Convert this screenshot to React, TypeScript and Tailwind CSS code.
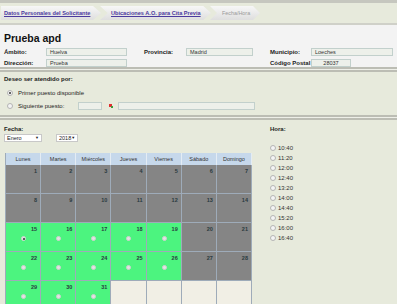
import React from "react";

const horas = ["10:40", "11:20", "12:00", "12:40", "13:20", "14:00", "14:40", "15:20", "16:00", "16:40"];
const dias = ["Lunes", "Martes", "Miércoles", "Jueves", "Viernes", "Sábado", "Domingo"];

// availability for enero 2018
const libres = [15, 16, 17, 18, 19, 22, 23, 24, 25, 26, 29, 30, 31];

const Radio = ({ checked = false }: { checked?: boolean }) => (
  <span className="inline-flex items-center justify-center rounded-full border border-[#b4b4b4] w-[6px] h-[6px] bg-[#f4f4f4]">
    {checked && <span className="w-[2px] h-[2px] rounded-full bg-[#333]" />}
  </span>
);

const Field = ({ w, value, center = false }: { w: string; value: string; center?: boolean }) => (
  <div
    className={`${w} h-[8px] border border-[#c2d0cc] bg-[#edf0ea] text-[5.5px] leading-[6px] px-[3px] text-[#333] ${
      center ? "text-center" : ""
    }`}
  >
    {value}
  </div>
);

const Separator = () => (
  <div className="h-[5px] border-y-2 border-[#bcbdb4] bg-[#eeefe8]" />
);

export default function App() {
  const cells: (number | null)[] = [];
  for (let d = 1; d <= 31; d++) cells.push(d);
  while (cells.length < 35) cells.push(null);

  return (
    <div className="w-[397px] h-[304px] overflow-hidden bg-[#e7eadc] font-['Liberation_Sans',sans-serif] text-[6px] text-[#222]">
      {/* breadcrumb */}
      <div className="h-[3px] bg-[#c6c7bf]" />
      <div className="h-[20px] flex items-center pl-[1px]">
        <div className="h-[14px] w-[100px] bg-gradient-to-b from-[#f7f7f7] to-[#dedede] [clip-path:polygon(0_0,92%_0,100%_50%,92%_100%,0_100%)] flex items-center pl-[3px]">
          <span className="text-[#4b3a9e] underline font-bold text-[5.6px]">Datos Personales del Solicitante</span>
        </div>
        <div className="h-[14px] w-[111px] -ml-[1px] bg-gradient-to-b from-[#f7f7f7] to-[#dedede] [clip-path:polygon(0_0,93%_0,100%_50%,93%_100%,0_100%,7%_50%)] flex items-center pl-[11px]">
          <span className="text-[#4b3a9e] underline font-bold text-[5.6px]">Ubicaciones A.O. para Cita Previa</span>
        </div>
        <div className="h-[14px] w-[50px] -ml-[1px] bg-gradient-to-b from-[#f7f7f7] to-[#dedede] [clip-path:polygon(0_0,86%_0,100%_50%,86%_100%,0_100%,14%_50%)] flex items-center pl-[12px]">
          <span className="text-[#9a9a9a] text-[5.4px]">Fecha/Hora</span>
        </div>
      </div>
      <div className="h-[2px] bg-[#cfd0c8]" />

      {/* datos */}
      <div className="bg-[#f3f3f3] px-[4px] pt-[8px] h-[42px]">
        <div className="text-[10.5px] font-bold leading-[11px] text-[#111]">Prueba apd</div>
        <div className="flex items-center mt-[4px] h-[8px]">
          <div className="w-[42px] font-bold">Ámbito:</div>
          <Field w="w-[81px]" value="Huelva" />
          <div className="w-[17px]" />
          <div className="w-[42px] font-bold">Provincia:</div>
          <Field w="w-[67px]" value="Madrid" />
          <div className="w-[17px]" />
          <div className="w-[41px] font-bold">Municipio:</div>
          <Field w="w-[82px]" value="Loeches" />
        </div>
        <div className="flex items-center mt-[3px] h-[8px]">
          <div className="w-[42px] font-bold">Dirección:</div>
          <Field w="w-[81px]" value="Prueba" />
          <div className="w-[17px]" />
          <div className="w-[42px]" />
          <div className="w-[67px]" />
          <div className="w-[17px]" />
          <div className="w-[41px] font-bold">Código Postal</div>
          <Field w="w-[40px]" value="28037" center />
        </div>
      </div>
      <Separator />

      {/* atendido por */}
      <div className="h-[43px] px-[4px] pt-[3px]">
        <div className="font-bold leading-[8px]">Deseo ser atendido por:</div>
        <div className="flex items-center mt-[6px] h-[8px] pl-[3px]">
          <Radio checked />
          <span className="ml-[5px]">Primer puesto disponible</span>
        </div>
        <div className="flex items-center mt-[5px] h-[8px] pl-[3px]">
          <Radio />
          <span className="ml-[5px] w-[60px]">Siguiente puesto:</span>
          <Field w="w-[24px]" value="" />
          <span className="ml-[6px] w-[6px] h-[6px] relative">
            <span className="absolute left-[1px] top-[1px] w-[3px] h-[3px] bg-[#e03030]" />
            <span className="absolute left-[3px] top-[3px] w-[2px] h-[2px] bg-[#3aa040]" />
          </span>
          <div className="ml-[4px]">
            <Field w="w-[137px]" value="" />
          </div>
        </div>
      </div>
      <Separator />

      {/* fecha / hora */}
      <div className="flex">
        <div className="w-[265px] pl-[4px] pt-[6px]">
          <div className="font-bold leading-[7px]">Fecha:</div>
          <div className="flex items-center mt-[1px] h-[8px]">
            <div className="w-[38px] h-[8px] bg-white border border-[#c8c8c8] flex items-center justify-between px-[2px] text-[5.5px]">
              <span>Enero</span>
              <span className="text-[4px]">▼</span>
            </div>
            <div className="ml-[14px] w-[22px] h-[8px] bg-white border border-[#c8c8c8] flex items-center justify-between px-[2px] text-[5.5px]">
              <span>2018</span>
              <span className="text-[4px]">▼</span>
            </div>
          </div>
          <div className="mt-[11px] ml-[1px] w-[247px] border-l border-[#9eabb9]">
            <div className="grid grid-cols-7 h-[12px] bg-[#c6d8eb]">
              {dias.map((d) => (
                <div key={d} className="flex items-center justify-center border-r border-[#e4ecf4] text-[5.5px] text-[#333]">
                  {d}
                </div>
              ))}
            </div>
            <div className="grid grid-cols-7">
              {cells.map((d, i) => {
                const libre = d !== null && libres.includes(d);
                const bg = d === null ? "bg-[#f1efe5]" : libre ? "bg-[#4cf47f]" : "bg-[#858585]";
                return (
                  <div
                    key={i}
                    className={`h-[29px] border-r border-b border-[#9eabb9] ${bg} relative`}
                  >
                    {d !== null && (
                      <span className="absolute right-[3px] top-[2px] font-bold text-[5.5px] text-[#2a3a40]">{d}</span>
                    )}
                    {libre && (
                      <span className="absolute left-[15px] top-[13px] w-[5px] h-[5px] rounded-full bg-[#e2e2e2] border border-[#cfcfcf] flex items-center justify-center">
                        {d === 15 && <span className="w-[2px] h-[2px] rounded-full bg-[#333]" />}
                      </span>
                    )}
                  </div>
                );
              })}
            </div>
          </div>
        </div>
        <div className="pl-[5px] pt-[6px]">
          <div className="font-bold leading-[7px]">Hora:</div>
          <div className="mt-[12px] flex flex-col gap-[4px]">
            {horas.map((h) => (
              <div key={h} className="flex items-center h-[6px]">
                <Radio />
                <span className="ml-[2px] text-[#333]">{h}</span>
              </div>
            ))}
          </div>
        </div>
      </div>
    </div>
  );
}
